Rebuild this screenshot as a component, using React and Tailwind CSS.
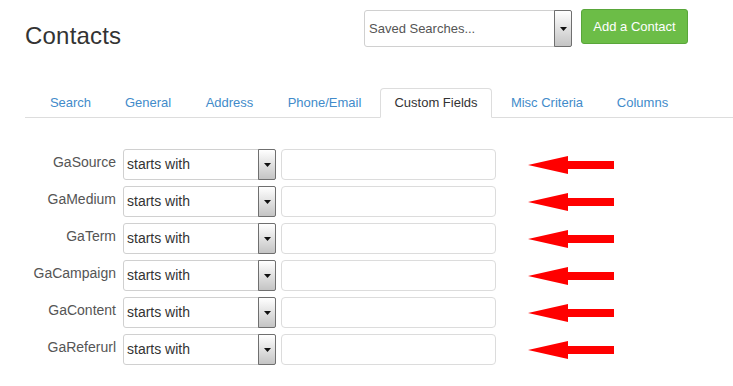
import React from 'react';

const tabs = [
  { name: 'Search', w: 'w-[71px]' },
  { name: 'General', w: 'w-[76px]' },
  { name: 'Address', w: 'w-[79px]' },
  { name: 'Phone/Email', w: 'w-[103px]' },
  { name: 'Custom Fields', w: 'w-[112px]' },
  { name: 'Misc Criteria', w: 'w-[102px]' },
  { name: 'Columns', w: 'w-[81px]' },
];
const fields = ['GaSource', 'GaMedium', 'GaTerm', 'GaCampaign', 'GaContent', 'GaReferurl'];

const DropButton = () => (
  <div className="-my-px -mr-px w-[18px] flex items-center justify-center border border-[#6f6f6f] rounded-r-[2px] bg-gradient-to-b from-white to-[#c4c4c4]">
    <svg width="7" height="4" viewBox="0 0 7 4">
      <polygon points="0,0 7,0 3.5,4" fill="#111" />
    </svg>
  </div>
);

const RedArrow = () => (
  <svg width="86" height="18" viewBox="0 0 86 18" className="self-center ml-[32px]">
    <polygon points="0,9 40,0 40,5 86,5 86,13 40,13 40,18" fill="#ff0000" />
  </svg>
);

const FieldRow = ({ label }) => (
  <div className="flex items-start h-[31px]">
    <div className="w-[91px] pt-[3px] text-right text-[14px] leading-[20px] text-[#555]">{label}</div>
    <div className="ml-[7px] w-[153px] h-[31px] flex border border-[#d0d0d0] rounded-[3px] bg-white">
      <div className="flex-1 pl-[3px] text-[14px] leading-[29px] text-[#333]">starts with</div>
      <DropButton />
    </div>
    <div className="ml-[5px] w-[215px] h-[31px] border border-[#dcdcdc] rounded-[4px] bg-white" />
    <RedArrow />
  </div>
);

export default function App() {
  return (
    <div className="w-[733px] h-[386px] overflow-hidden bg-white pl-[25px] font-['Liberation_Sans',Arial,sans-serif]">
      {/* header */}
      <div className="flex items-start pt-[9px] pr-[45px]">
        <h1 className="mt-[15px] text-[24px] leading-[24px] text-[#333] tracking-[0.2px]">Contacts</h1>
        <div className="ml-auto flex items-start">
          <div className="mt-[1px] w-[208px] h-[37px] flex border border-[#d0d0d0] rounded-[3px] bg-white">
            <div className="flex-1 pl-[4px] text-[13px] leading-[35px] text-[#555]">Saved Searches...</div>
            <DropButton />
          </div>
          <button className="ml-[9px] w-[107px] h-[35px] rounded-[3px] border border-[#59a63a] bg-[#6cbd47] text-[13px] text-white">
            Add a Contact
          </button>
        </div>
      </div>

      {/* tabs */}
      <div className="mt-[40px] flex pl-[10px] border-b border-[#dddddd]">
        {tabs.map((t) => {
          const active = t.name === 'Custom Fields';
          return (
            <div
              key={t.name}
              className={
                (active
                  ? '-mb-px h-[30px] text-[#333] bg-white border-[#dddddd] border-b-white rounded-t-[4px] '
                  : 'h-[29px] text-[#428bca] border-transparent ') +
                t.w +
                ' mr-[4px] border pt-[6px] text-center text-[13px] leading-[16px] whitespace-nowrap'
              }
            >
              {t.name}
            </div>
          );
        })}
      </div>

      {/* custom field rows */}
      <div className="mt-[31px] flex flex-col gap-[6px]">
        {fields.map((f) => (
          <FieldRow key={f} label={f} />
        ))}
      </div>
    </div>
  );
}
